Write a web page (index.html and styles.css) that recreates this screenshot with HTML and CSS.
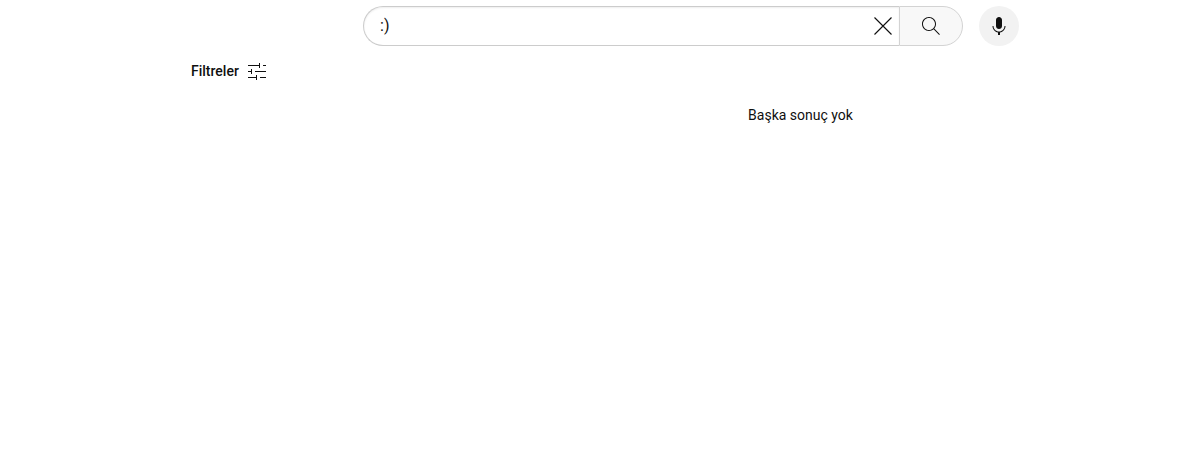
FILE: index.html
```html
<!DOCTYPE html>
<html lang="tr">
<head>
<meta charset="utf-8">
<title>Arama</title>
<link rel="stylesheet" href="styles.css">
</head>
<body>
<header class="masthead">
  <form class="search" role="search">
    <div class="search-box">
      <input class="search-input" type="text" aria-label="Ara" value=":)">
      <button class="clear-button" type="button" aria-label="Temizle">
        <svg class="icon" viewBox="0 0 24 24"><path d="M3.5 3.5l17 17M20.5 3.5l-17 17" fill="none" stroke="currentColor" stroke-width="1.1"/></svg>
      </button>
    </div>
    <button class="search-button" type="submit" aria-label="Ara">
      <svg class="icon" viewBox="0 0 24 24"><path d="m20.87 20.17-5.59-5.59C16.35 13.35 17 11.75 17 10c0-3.87-3.13-7-7-7s-7 3.13-7 7 3.13 7 7 7c1.75 0 3.35-.65 4.58-1.71l5.59 5.59.7-.71zM10 16c-3.31 0-6-2.69-6-6s2.69-6 6-6 6 2.69 6 6-2.69 6-6 6z"/></svg>
    </button>
  </form>
  <button class="voice-button" type="button" aria-label="Sesle ara">
    <svg class="icon" viewBox="0 0 24 24"><path d="M12 3c-1.66 0-3 1.37-3 3.07v5.86c0 1.7 1.34 3.07 3 3.07s3-1.37 3-3.07V6.07C15 4.37 13.66 3 12 3zm6.5 9h-1c0 3.03-2.47 5.5-5.5 5.5S6.5 15.03 6.5 12h-1c0 3.24 2.39 5.93 5.5 6.41V21h2v-2.59c3.11-.48 5.5-3.17 5.5-6.41z"/></svg>
  </button>
</header>
<main class="results">
  <button class="filter-button" type="button">
    <span>Filtreler</span>
    <svg class="icon" viewBox="0 0 24 24"><path d="M3 6h11V4h1v5h-1V7H3zM18 6h3v1h-3zM3 12h3v-2h1v5H6v-2H3zM10 12h11v1H10zM3 18h8v-2h1v5h-1v-2H3zM15 18h6v1h-6z"/></svg>
  </button>
  <p class="message">Başka sonuç yok</p>
</main>
</body>
</html>
```
FILE: styles.css
```css
* {
  box-sizing: border-box;
}

body {
  margin: 0;
  background: #fff;
  color: #0f0f0f;
  font-family: Roboto, Arial, sans-serif;
  font-size: 14px;
  line-height: 20px;
}

button {
  display: flex;
  align-items: center;
  justify-content: center;
  padding: 0;
  border: 0;
  background: none;
  color: inherit;
  font: inherit;
  cursor: pointer;
}

.icon {
  display: block;
  flex: none;
  width: 24px;
  height: 24px;
  fill: currentColor;
}

.masthead {
  display: flex;
  justify-content: center;
  gap: 16px;
  padding: 6px 0 6px 183px;
}

.search {
  display: flex;
  flex: 0 1 600px;
}

.search-box {
  display: flex;
  flex: 1;
  align-items: center;
  height: 40px;
  padding: 0 4px 0 16px;
  border: 1px solid #ccc;
  border-right: 0;
  border-radius: 40px 0 0 40px;
  box-shadow: inset 0 1px 2px #eee;
}

.search-input {
  flex: 1;
  min-width: 0;
  padding: 0;
  border: 0;
  outline: 0;
  background: transparent;
  color: #111;
  font: 16px/24px Roboto, Arial, sans-serif;
}

.search-button {
  width: 64px;
  height: 40px;
  border: 1px solid #d3d3d3;
  border-radius: 0 40px 40px 0;
  background: #f8f8f8;
}

.voice-button {
  width: 40px;
  height: 40px;
  border-radius: 50%;
  background: #f2f2f2;
}

.results {
  padding: 7px 0 0 191px;
}

.filter-button {
  gap: 6px;
  font-weight: 500;
}

.message {
  margin: 22px 0 0;
  padding-left: 211px;
  text-align: center;
}
```
